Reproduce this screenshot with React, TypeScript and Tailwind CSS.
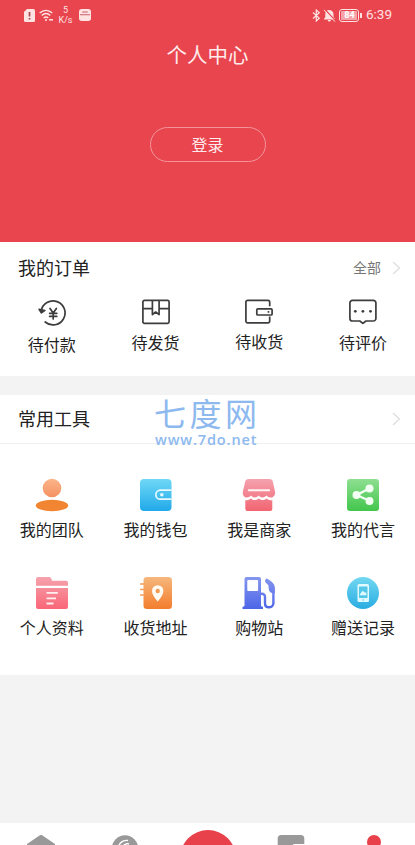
import type { ReactNode } from 'react'

interface MenuItem {
  label: string
  icon: ReactNode
  offset?: string
}

const orders: MenuItem[] = [
  {
    label: '待付款',
    offset: 'mt-[7px]',
    icon: (
      <svg width="32" height="28" viewBox="0 0 32 28" fill="none" stroke="#3d3d3d" strokeWidth="1.7" strokeLinecap="round" strokeLinejoin="round">
        <path d="M5.2 12A12 12 0 1 1 9.2 23" />
        <path d="M3 10.3l2.4 3.7 3.6-2.6z" fill="#3d3d3d" strokeWidth="1.4" />
        <path d="M14 9.5l3.2 4.5 3.2-4.5M13.6 14.3h7.2M13.6 17.3h7.2M17.2 14v6" strokeWidth="1.7" />
      </svg>
    ),
  },
  {
    label: '待发货',
    offset: 'mt-[5px]',
    icon: (
      <svg width="32" height="28" viewBox="0 0 32 28" fill="none" stroke="#3d3d3d" strokeWidth="1.7" strokeLinejoin="round">
        <rect x="2.9" y="1.4" width="26.2" height="23" rx="1.6" />
        <path d="M3 9.7h9.4M19.1 9.7H29M12.4 1.5v14.1l3.3-2.6 3.4 2.6V1.5" />
      </svg>
    ),
  },
  {
    label: '待收货',
    offset: 'mt-[4px]',
    icon: (
      <svg width="32" height="28" viewBox="0 0 32 28" fill="none" stroke="#3d3d3d" strokeWidth="1.7" strokeLinejoin="round">
        <path d="M26.7 7.2V3.1A1.7 1.7 0 0 0 25 1.4H4.6a1.7 1.7 0 0 0-1.7 1.7v19a1.7 1.7 0 0 0 1.7 1.7H25a1.7 1.7 0 0 0 1.7-1.7v-4.5" />
        <rect x="13.8" y="9.9" width="15.3" height="6.1" rx="1" />
        <path d="M24.6 12.9h1.7" />
      </svg>
    ),
  },
  {
    label: '待评价',
    offset: 'mt-[5px]',
    icon: (
      <svg width="32" height="28" viewBox="0 0 32 28" fill="none" stroke="#3d3d3d" strokeWidth="1.7" strokeLinejoin="round">
        <path d="M5.5 1.4h20.8a2.6 2.6 0 0 1 2.6 2.6v15.4a2.6 2.6 0 0 1-2.6 2.6h-7.3l-3.1 2.4-3.1-2.4H5.5a2.6 2.6 0 0 1-2.6-2.6V4a2.6 2.6 0 0 1 2.6-2.6z" />
        <g fill="#3d3d3d" stroke="none">
          <circle cx="8.3" cy="12.3" r="1.4" />
          <circle cx="15.9" cy="12.3" r="1.4" />
          <circle cx="23.5" cy="12.3" r="1.4" />
        </g>
      </svg>
    ),
  },
]

const tools: MenuItem[] = [
  {
    label: '我的团队',
    icon: (
      <svg width="34" height="34" viewBox="0 0 34 34">
        <linearGradient id="team" x2="0" y2="1">
          <stop stopColor="#fbb58a" />
          <stop offset="1" stopColor="#f49161" />
        </linearGradient>
        <circle cx="17" cy="10" r="9.3" fill="url(#team)" />
        <ellipse cx="17" cy="27.5" rx="16.2" ry="5.7" fill="#f28532" />
      </svg>
    ),
  },
  {
    label: '我的钱包',
    icon: (
      <svg width="34" height="34" viewBox="0 0 34 34">
        <linearGradient id="wallet" x2="0" y2="1">
          <stop stopColor="#70d8f6" />
          <stop offset="1" stopColor="#20a9e9" />
        </linearGradient>
        <rect x="1" y="1" width="31.5" height="32" rx="4" fill="url(#wallet)" />
        <path d="M32.5 12.2H21.3a4.4 4.4 0 0 0 0 8.9h11.2" fill="none" stroke="#e7f9ff" strokeWidth="1.7" />
        <circle cx="22.8" cy="16.7" r="1.8" fill="#e7f9ff" />
      </svg>
    ),
  },
  {
    label: '我是商家',
    icon: (
      <svg width="34" height="34" viewBox="0 0 34 34">
        <linearGradient id="shop" x2="0" y2="34" gradientUnits="userSpaceOnUse">
          <stop stopColor="#f5a3b0" />
          <stop offset="1" stopColor="#f26370" />
        </linearGradient>
        <g fill="url(#shop)">
          <path d="M7 1h20a4 4 0 0 1 4 3.2l2 9.2c.8 3.4-1.5 6.2-4.4 6.2-1.6 0-3.1-.7-4.2-2-1.2 1.3-2.5 2-4 2s-2.7-.7-3.7-2c-1.1 1.3-2.5 2-4 2s-2.7-.7-3.7-2c-1.1 1.3-2.5 2-4.2 2C2 19.6.1 16.8.9 13.4L3 4.2A4 4 0 0 1 7 1z" />
          <path d="M3.3 22.3c2.2 0 3.9-.6 5.7-1.9 2.2 2 5.2 2 7.7 0 2.5 2 5.5 2 7.7 0 1.7 1.3 3.7 1.9 5.9 1.9V31a2 2 0 0 1-2 2h-23a2 2 0 0 1-2-2z" />
        </g>
        <path d="M6.8 12.3h20.4" stroke="#fff5f5" strokeWidth="1.9" strokeLinecap="round" />
      </svg>
    ),
  },
  {
    label: '我的代言',
    icon: (
      <svg width="34" height="34" viewBox="0 0 34 34">
        <linearGradient id="share" x2="0" y2="1">
          <stop stopColor="#8edf91" />
          <stop offset="1" stopColor="#42c64c" />
        </linearGradient>
        <rect x="1" y="1" width="32" height="32" rx="3" fill="url(#share)" />
        <path d="M23.5 10.5L10.5 17l13 5.8" fill="none" stroke="#f2fff2" strokeWidth="2.3" />
        <g fill="#f2fff2">
          <circle cx="23.5" cy="10.5" r="4" />
          <circle cx="10.5" cy="17" r="4" />
          <circle cx="23.5" cy="23" r="4" />
        </g>
      </svg>
    ),
  },
  {
    label: '个人资料',
    icon: (
      <svg width="34" height="34" viewBox="0 0 34 34">
        <linearGradient id="profile" x2="0" y2="34" gradientUnits="userSpaceOnUse">
          <stop stopColor="#f5a5af" />
          <stop offset="1" stopColor="#f96475" />
        </linearGradient>
        <g fill="url(#profile)">
          <path d="M1 9.8V3a2 2 0 0 1 2-2h11.2a2 2 0 0 1 1.8 1.2l1.2 2.6H31a2 2 0 0 1 2 2v3z" />
          <path d="M1 12h32v19a2 2 0 0 1-2 2H3a2 2 0 0 1-2-2z" />
        </g>
        <path d="M11.5 16.8h11.3M11.5 22.3h9.5M11.5 27.5h7" stroke="#fff0f0" strokeWidth="1.8" />
      </svg>
    ),
  },
  {
    label: '收货地址',
    icon: (
      <svg width="34" height="34" viewBox="0 0 34 34">
        <linearGradient id="address" x2="0" y2="1">
          <stop stopColor="#f6b77c" />
          <stop offset="1" stopColor="#f37d2d" />
        </linearGradient>
        <rect x="4.5" y="1" width="28.5" height="32" rx="3.5" fill="url(#address)" />
        <path d="M1 8h5M1 13.5h5M1 19h5" stroke="#f4a05d" strokeWidth="1.7" />
        <path d="M18.7 25.5c-3.3-4.1-5.7-7-5.7-10.6a5.7 5.7 0 0 1 11.4 0c0 3.6-2.4 6.5-5.7 10.6z" fill="#fffaf2" />
        <circle cx="18.7" cy="15" r="2.2" fill="#f39b52" />
      </svg>
    ),
  },
  {
    label: '购物站',
    icon: (
      <svg width="34" height="34" viewBox="0 0 34 34">
        <linearGradient id="station" x2="0" y2="34" gradientUnits="userSpaceOnUse">
          <stop stopColor="#8798ee" />
          <stop offset="1" stopColor="#4b64e8" />
        </linearGradient>
        <path d="M2.5 30V3a2 2 0 0 1 2-2H17a2 2 0 0 1 2 2v27l2 1v2H.5v-2z" fill="url(#station)" />
        <rect x="5.3" y="4" width="10.8" height="11" rx=".8" fill="#fff" />
        <path d="M19 17.8h1a3 3 0 0 1 3 3v6.5c0 2.5 1.4 4 3.8 4s4.6-1.5 4.6-4V11.5" fill="none" stroke="url(#station)" strokeWidth="2.4" />
        <path d="M24.7 2.5c2.5 1.2 8.1 4.5 8.1 9v5.8c-3 .5-5.6-1-6-4l-.4-4-2.8-2.8a2.5 2.5 0 0 1 1.1-4z" fill="url(#station)" />
      </svg>
    ),
  },
  {
    label: '赠送记录',
    icon: (
      <svg width="34" height="34" viewBox="0 0 34 34">
        <linearGradient id="gift" x2="0" y2="1">
          <stop stopColor="#72d8f1" />
          <stop offset="1" stopColor="#29ace1" />
        </linearGradient>
        <circle cx="17" cy="17" r="16" fill="url(#gift)" />
        <rect x="11.5" y="8" width="11.5" height="18" rx="1.5" fill="#e0faff" />
        <path d="M13 10.5h8.5V22H13z" fill="#55c8e9" />
        <path d="M14 18.3l2.6-3.5 1.8 1.5 2 .4v2.6H14z" fill="#e0faff" />
        <circle cx="17.2" cy="24" r=".8" fill="#55c8e9" />
      </svg>
    ),
  },
]

function Chevron() {
  return (
    <svg width="9" height="14" viewBox="0 0 9 14" fill="none" stroke="#dedede" strokeWidth="1.3">
      <path d="M1 1l6.5 6L1 13" />
    </svg>
  )
}

function StatusBar() {
  return (
    <div className="flex h-[30px] items-center justify-between pl-6 pr-[23px] text-[#ffe3e3]">
      <div className="flex items-center">
        <svg width="11" height="13" viewBox="0 0 11 13">
          <path d="M3 0h6.5A1.5 1.5 0 0 1 11 1.5v10A1.5 1.5 0 0 1 9.5 13h-8A1.5 1.5 0 0 1 0 11.5V3z" fill="currentColor" />
          <path d="M5.5 3v4.5M5.5 9v1.5" stroke="#a9434d" strokeWidth="1.7" />
        </svg>
        <svg className="ml-1" width="15" height="13" viewBox="0 0 15 13" fill="none" stroke="currentColor" strokeWidth="1.5">
          <path d="M.7 4c3.8-3.5 8.8-3.5 12.6 0M2.7 6.5c2.6-2.4 6-2.4 8.6 0M4.7 9c1.5-1.3 3.1-1.3 4.6 0" />
          <circle cx="7" cy="11" r="1" fill="currentColor" stroke="none" />
          <path d="M10 10.8h4" />
        </svg>
        <div className="ml-[4px] w-[15px] text-center font-['Roboto',sans-serif] text-[9px] leading-[10px]">
          <p>5</p>
          <p>K/s</p>
        </div>
        <svg className="ml-[6px]" width="12" height="12" viewBox="0 0 13 13">
          <rect width="13" height="13" rx="3" fill="currentColor" />
          <path d="M1 6.3h11M3.5 3.3h6" stroke="#c96069" strokeWidth="1.1" />
        </svg>
      </div>
      <div className="flex items-center">
        <svg width="9" height="13" viewBox="0 0 9 13" fill="none" stroke="currentColor" strokeWidth="1.2">
          <path d="M1 3.5l6.3 5.7-3 2.8V1l3 2.7L1 9.5" />
        </svg>
        <svg className="ml-[2px]" width="13" height="13" viewBox="0 0 13 13">
          <path d="M6 1c2.8 0 4.5 2 4.5 4.2v3.1l1.5 1.5v.7H1v-.7l1.3-1.5V5.2C2.3 3 3.5 1 6 1zM4.8 11h3c0 2-3 2-3 0z" fill="currentColor" />
          <path d="M1.9.4l11 12" stroke="#e8454f" strokeWidth="1.3" />
          <path d="M.9.9l11.1 11.8" stroke="currentColor" strokeWidth="1" />
        </svg>
        <div className="ml-[3px] flex h-[13px] w-[20px] items-center justify-center rounded-[3px] border border-[#ffe3e3] p-px">
          <span className="flex h-full w-full items-center justify-center rounded-[1px] bg-[#f6a4aa] font-['Roboto',sans-serif] text-[9px] font-bold leading-none text-white">84</span>
        </div>
        <span className="ml-px h-[5px] w-[1.5px] bg-[#ffe3e3]" />
        <span className="ml-[4px] font-['Roboto',sans-serif] text-[13.5px] leading-none">6:39</span>
      </div>
    </div>
  )
}

function TabBar() {
  return (
    <nav className="grid h-[22px] shrink-0 grid-cols-5 justify-items-center overflow-hidden bg-white">
      <svg className="mt-3 mr-[1px]" width="28" height="28" viewBox="0 0 28 28" fill="#999">
        <path d="M12.5.5a2.5 2.5 0 0 1 3 0L28 9v17H0V9z" />
      </svg>
      <svg className="mt-3" width="28" height="28" viewBox="0 0 28 28">
        <circle cx="14" cy="13.5" r="13.2" fill="#999" />
        <path d="M7.5 14A8 8 0 0 1 17 5.5M11.5 13a5 5 0 0 1 6.5-4" fill="none" stroke="#fff" strokeWidth="1.4" />
      </svg>
      <span className="mt-[7px] h-14 w-14 rounded-full bg-[#e8414c]" />
      <svg className="mt-3" width="28" height="28" viewBox="0 0 28 28">
        <rect x=".7" width="26.6" height="26" rx="3.5" fill="#999" />
        <path d="M28 9H18a3 3 0 0 0-3 3v5h13z" fill="#fff" />
      </svg>
      <svg className="mt-3" width="28" height="28" viewBox="0 0 28 28" fill="#e8414c">
        <circle cx="14" cy="7" r="7" />
        <path d="M2 26c0-13 24-13 24 0z" />
      </svg>
    </nav>
  )
}

export default function App() {
  return (
    <div className="flex h-[845px] w-[415px] flex-col overflow-hidden bg-[#f3f3f3] font-['Noto_Sans_CJK_SC',sans-serif] text-[#222]">
      <header className="h-[242px] shrink-0 bg-[#e8454f] text-center text-[#ffebeb]">
        <StatusBar />
        <h1 className="mt-2 text-[20.5px] leading-8">个人中心</h1>
        <button className="mx-auto mt-[57px] block h-[35px] w-[116px] rounded-full border border-[#f5949a] text-base leading-[31px]">登录</button>
      </header>

      <section className="h-[134px] shrink-0 bg-white">
        <div className="flex h-[50px] items-center justify-between pl-[18px] pr-[14px]">
          <h2 className="text-[18px]">我的订单</h2>
          <div className="flex items-center text-[14px] text-[#777]">
            <span className="mr-[11px]">全部</span>
            <span className="mt-[1px]">
              <Chevron />
            </span>
          </div>
        </div>
        <div className="mt-[7px] grid grid-cols-4">
          {orders.map(item => (
            <div key={item.label} className="flex flex-col items-center text-base leading-5">
              {item.icon}
              <span className={item.offset}>{item.label}</span>
            </div>
          ))}
        </div>
      </section>

      <section className="relative mt-[19px] h-[280px] shrink-0 bg-white">
        <div className="flex h-[49px] items-center justify-between border-b border-[#f0f0f0] pl-[18px] pr-[14px]">
          <h2 className="-mt-[2px] text-[18px]">常用工具</h2>
          <Chevron />
        </div>
        <div className="mt-[34px] grid grid-cols-4 gap-y-[36px]">
          {tools.map(item => (
            <div key={item.label} className="flex h-[62px] flex-col items-center text-base leading-5">
              {item.icon}
              <span className="mt-[7px]">{item.label}</span>
            </div>
          ))}
        </div>
        <div className="absolute left-[154px] top-0 flex w-[112px] flex-col whitespace-nowrap text-[#8db9ef]">
          <p className="text-[32px] leading-[34px] tracking-[3.5px]">七度网</p>
          <p className="ml-[1px] mt-[4px] font-['Open_Sans',sans-serif] text-[14.5px] font-semibold leading-[14px] tracking-[0.85px]">www.7do.net</p>
        </div>
      </section>

      <div className="flex-1" />
      <TabBar />
    </div>
  )
}
